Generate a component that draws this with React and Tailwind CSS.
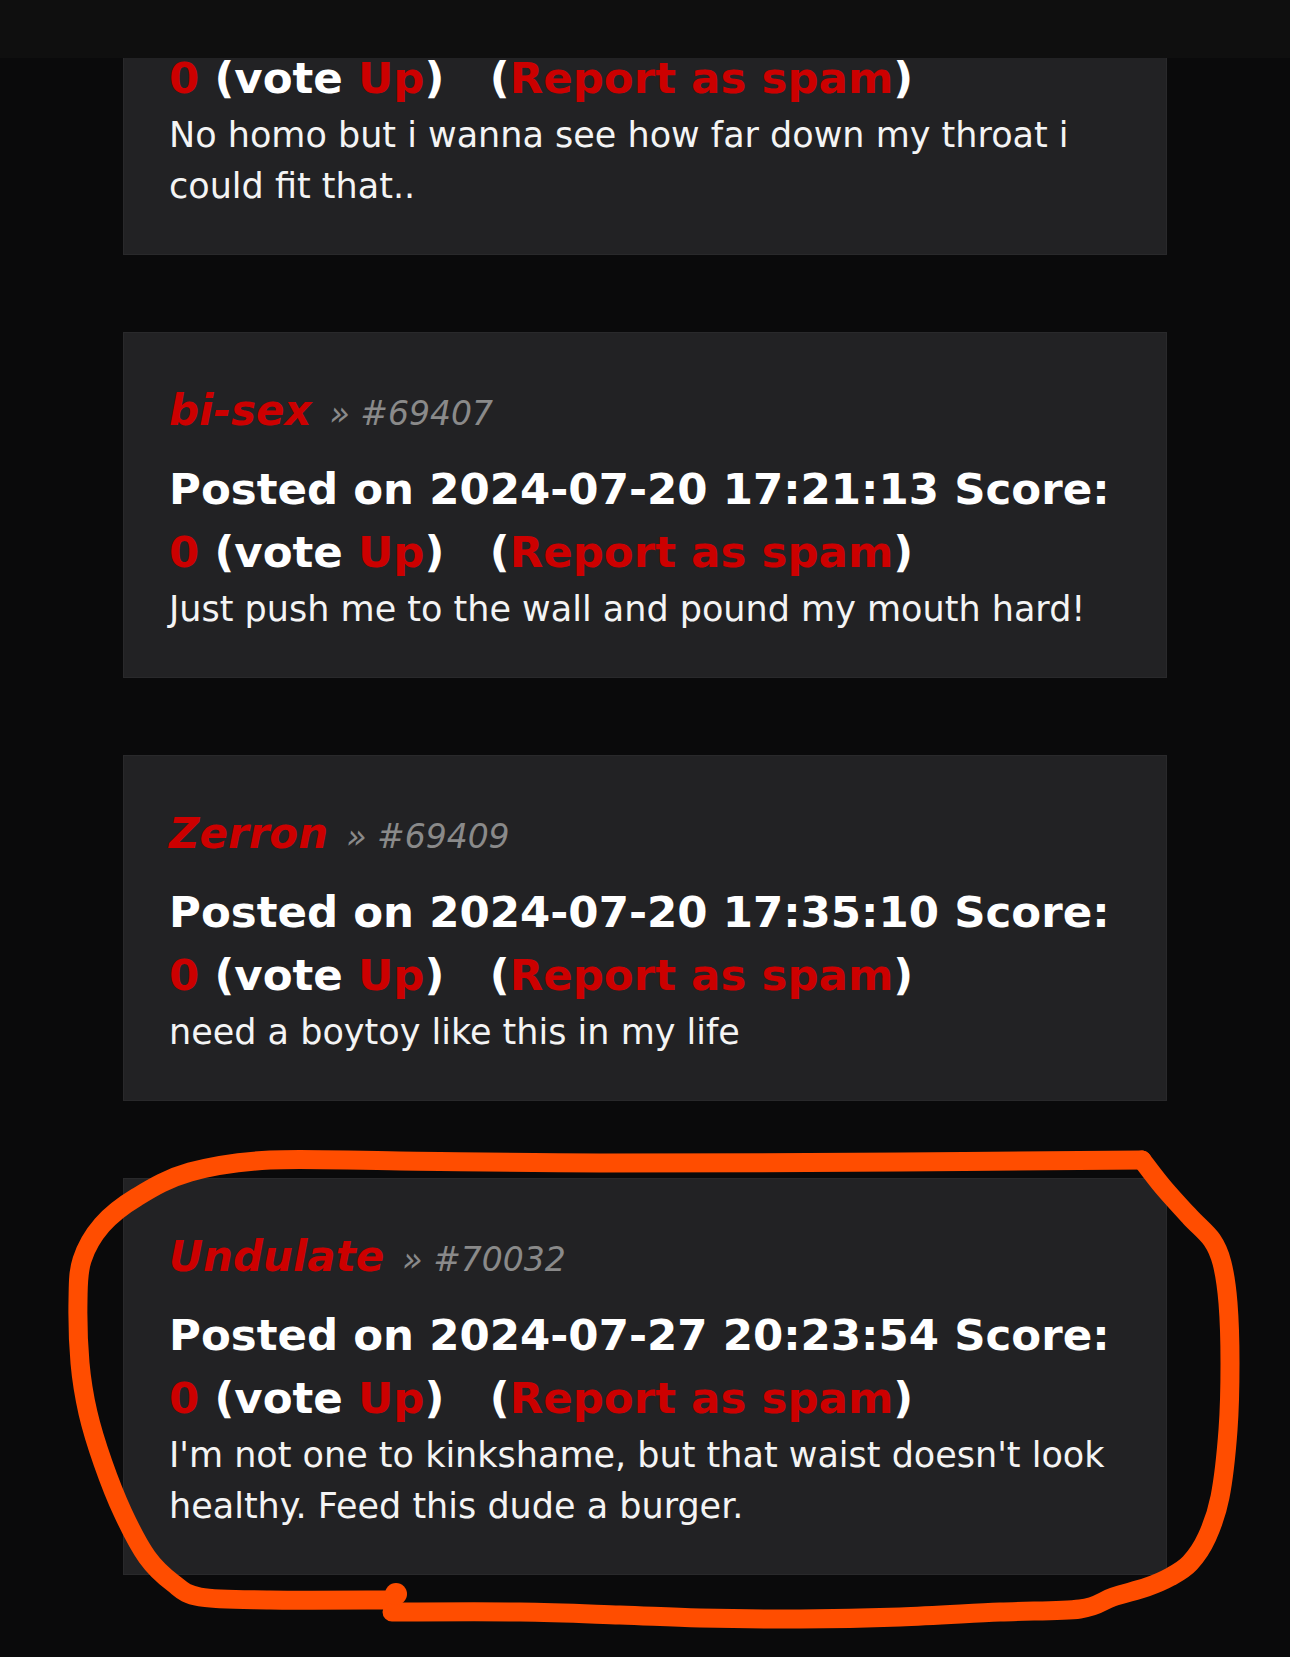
import React from "react";

const comments = [
  {
    name: "bi-sex",
    id: "69407",
    date: "2024-07-20 17:21:13",
    lines: ["Just push me to the wall and pound my mouth hard!"],
  },
  {
    name: "Zerron",
    id: "69409",
    date: "2024-07-20 17:35:10",
    lines: ["need a boytoy like this in my life"],
  },
  {
    name: "Undulate",
    id: "70032",
    date: "2024-07-27 20:23:54",
    lines: [
      "I'm not one to kinkshame, but that waist doesn't look",
      "healthy. Feed this dude a burger.",
    ],
  },
];

// hand drawn marker loop, in page pixels
const loopPts = [
  [1142, 1160], [900, 1162], [600, 1163], [400, 1161], [270, 1160], [190, 1172],
  [137, 1197], [102, 1225], [82, 1260], [78, 1300], [80, 1363], [88, 1413],
  [103, 1463], [123, 1513], [147, 1557], [173, 1583], [200, 1597], [270, 1600], [393, 1600],
];
const tailPts = [
  [392, 1612], [520, 1612], [620, 1615], [700, 1618], [800, 1619], [900, 1617],
  [1000, 1612], [1080, 1609], [1113, 1597], [1147, 1587], [1170, 1577], [1190, 1563],
  [1207, 1537], [1220, 1497], [1228, 1430], [1230, 1363], [1228, 1303], [1222, 1263],
  [1212, 1240], [1190, 1217], [1163, 1187], [1142, 1160],
];

const smooth = (pts) => {
  let d = `M${pts[0][0]} ${pts[0][1]}`;
  for (let i = 0; i < pts.length - 1; i++) {
    const p0 = pts[i - 1] || pts[i];
    const p1 = pts[i];
    const p2 = pts[i + 1];
    const p3 = pts[i + 2] || p2;
    const c1x = p1[0] + (p2[0] - p0[0]) / 6;
    const c1y = p1[1] + (p2[1] - p0[1]) / 6;
    const c2x = p2[0] - (p3[0] - p1[0]) / 6;
    const c2y = p2[1] - (p3[1] - p1[1]) / 6;
    d += ` C${c1x} ${c1y} ${c2x} ${c2y} ${p2[0]} ${p2[1]}`;
  }
  return d;
};

const VoteLine = () => (
  <div className="whitespace-nowrap">
    <span className="text-[#cc0000]">0</span> (vote{" "}
    <a className="text-[#cc0000]">Up</a>){"\u00a0\u00a0\u00a0"}(
    <a className="text-[#cc0000]">Report as spam</a>)
  </div>
);

const Comment = ({ c }) => (
  <div className="bg-[#222224] border border-[#29292b] pt-[53px] pb-[42px] pl-[45px] pr-[45px]">
    <div className="leading-[50px] h-[50px] mb-[22px] whitespace-nowrap">
      <span className="text-[42px] font-bold italic text-[#cc0000]">{c.name}</span>
      <span className="ml-[18px] text-[33px] italic text-[#8a8a8a] leading-none">» #{c.id}</span>
    </div>
    <div className="text-[43.5px] leading-[63px] font-bold text-white">
      <div className="whitespace-nowrap">Posted on {c.date} Score:</div>
      <VoteLine />
    </div>
    <div className="text-[35px] leading-[51px] text-[#f4f4f4] whitespace-nowrap">
      {c.lines.map((l, i) => (
        <div key={i}>{l}</div>
      ))}
    </div>
  </div>
);

export default function App() {
  return (
    <div className="relative h-[1657px] overflow-hidden bg-[#0a0a0b] font-['DejaVu_Sans',sans-serif]">
      <div className="absolute top-0 left-0 right-0 h-[58px] bg-[#0f0f0f] z-10" />

      <div className="w-[1044px] mx-auto flex flex-col gap-[77px]">
        <div className="bg-[#222224] border border-[#29292b] pt-[46px] pb-[42px] pl-[45px] pr-[45px]">
          <div className="text-[43.5px] leading-[63px] font-bold text-white">
            <VoteLine />
          </div>
          <div className="text-[35px] leading-[51px] text-[#f4f4f4] whitespace-nowrap">
            <div>No homo but i wanna see how far down my throat i</div>
            <div>could fit that..</div>
          </div>
        </div>
        {comments.map((c) => (
          <Comment key={c.id} c={c} />
        ))}
      </div>

      <svg
        className="absolute top-0 left-0 z-20 pointer-events-none"
        width="1290"
        height="1657"
        viewBox="0 0 1290 1657"
      >
        <g fill="none" stroke="#ff4d00" strokeWidth="19" strokeLinecap="round" strokeLinejoin="round">
          <path d={smooth(loopPts)} />
          <path d={smooth(tailPts)} />
        </g>
        <circle cx="396" cy="1594" r="11" fill="#ff4d00" />
      </svg>
    </div>
  );
}
